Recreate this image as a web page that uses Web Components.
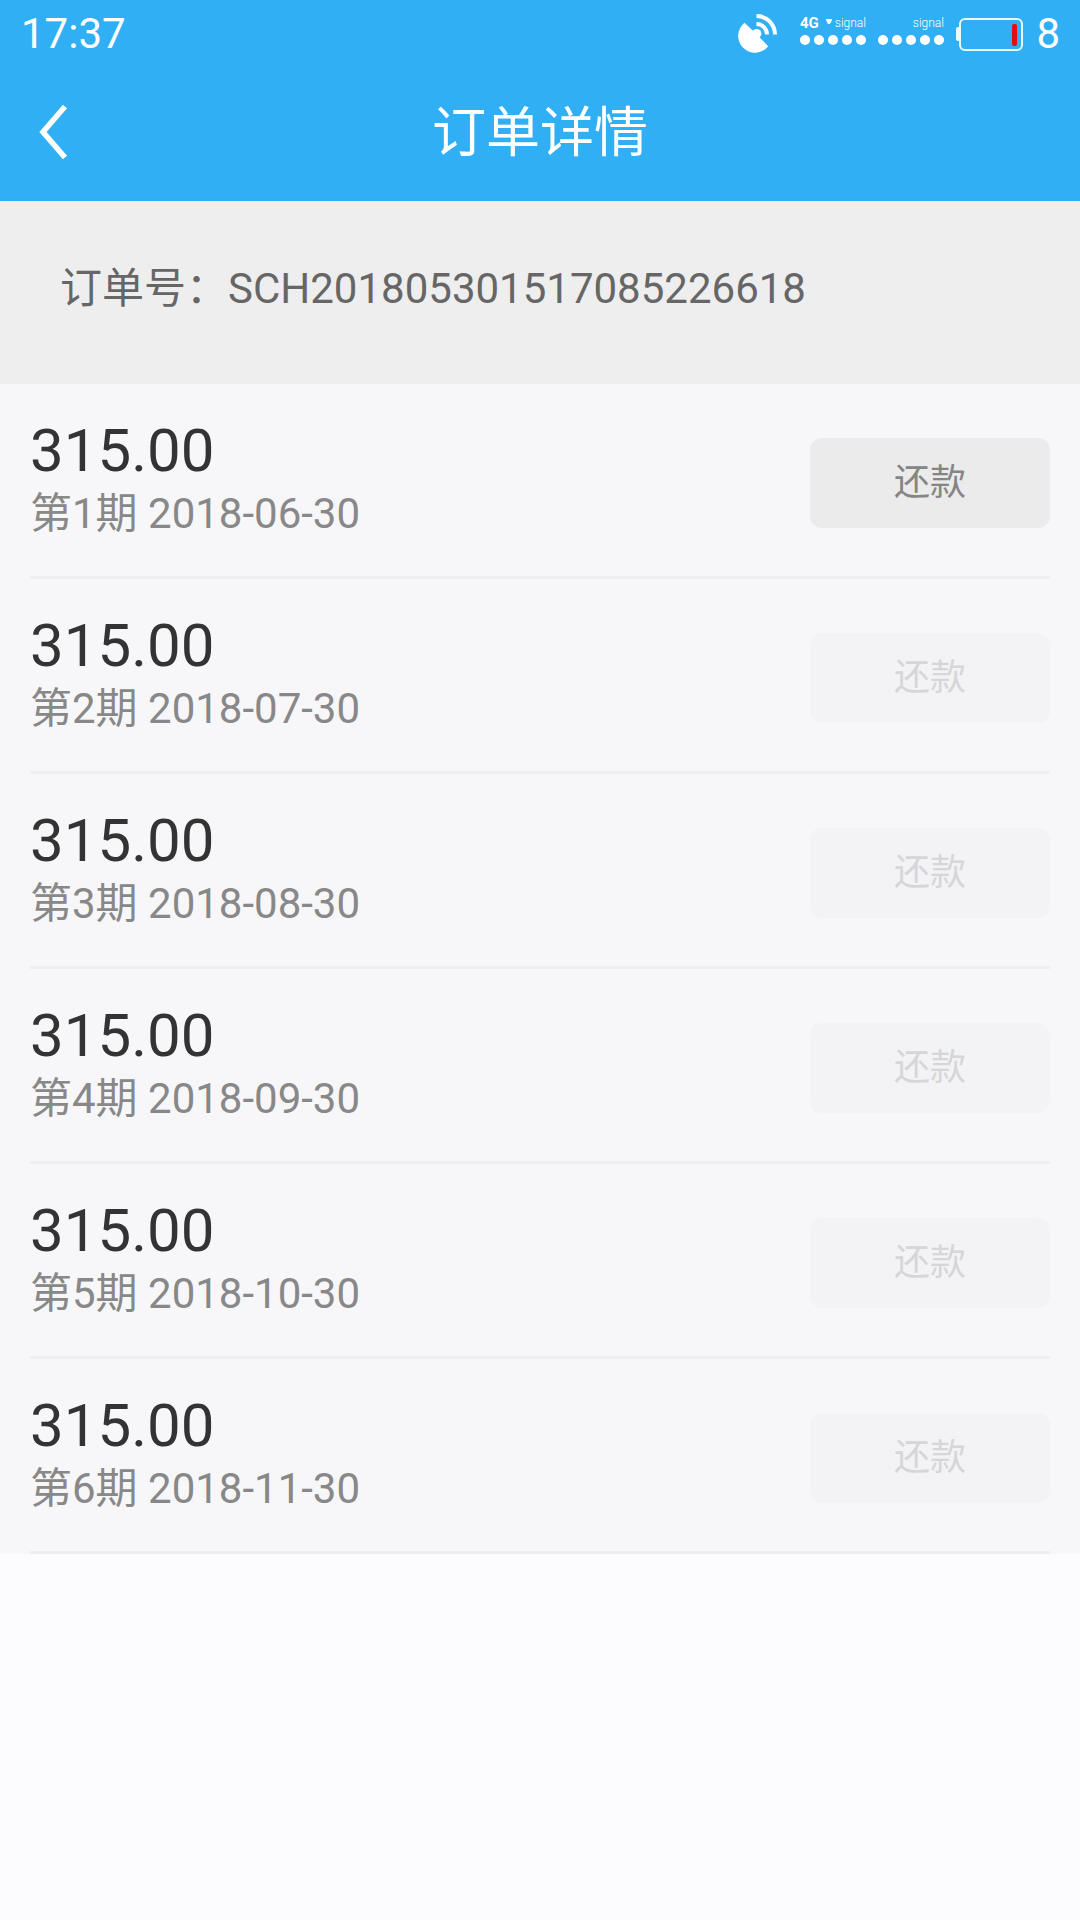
<!DOCTYPE html>
<html lang="zh-CN">
<head>
<meta charset="utf-8">
<meta name="viewport" content="width=device-width, initial-scale=1">
<title>订单详情</title>
<style>
  html { background: #fcfcfe; }
  body { margin: 0; font-family: Roboto, "Noto Sans CJK SC", sans-serif; font-size: 42px; }
</style>
</head>
<body>
<order-page>
  <status-bar slot="top" time="17:37" battery="8"></status-bar>
  <nav-bar slot="top">订单详情</nav-bar>
  <order-number slot="top" value="SCH201805301517085226618">订单号：</order-number>
  <bill-row amount="315.00" due="2018-06-30">第1期</bill-row>
  <bill-row amount="315.00" due="2018-07-30" locked>第2期</bill-row>
  <bill-row amount="315.00" due="2018-08-30" locked>第3期</bill-row>
  <bill-row amount="315.00" due="2018-09-30" locked>第4期</bill-row>
  <bill-row amount="315.00" due="2018-10-30" locked>第5期</bill-row>
  <bill-row amount="315.00" due="2018-11-30" locked>第6期</bill-row>
</order-page>
<script>
  class Base extends HTMLElement {
    connectedCallback() {
      if (!this.shadowRoot) this.attachShadow({ mode: 'open' }).innerHTML = this.render();
    }
  }

  customElements.define('order-page', class extends Base {
    render() {
      return `<style>
        :host { display: flex; flex-direction: column; }
        main { display: flex; flex-direction: column; background: #f7f7f9; }
      </style>
      <slot name="top"></slot>
      <main><slot></slot></main>`;
    }
  });

  customElements.define('signal-meter', class extends Base {
    render() {
      const net = this.getAttribute('network');
      return `<style>
        :host { display: flex; flex-direction: column; gap: 4px; padding-bottom: 6px; width: 66px; }
        .label { display: flex; justify-content: flex-end; align-items: center; height: 16px; font-size: 12px; line-height: 16px; font-weight: 300; }
        b { font-size: 15px; font-weight: 700; margin-right: auto; }
        .arrow { margin: 0 3px 4px 0; }
        .dots { display: flex; justify-content: space-between; }
        i { width: 10px; height: 10px; border-radius: 50%; background: #fff; }
      </style>
      <div class="label">${net ? `<b>${net}</b><svg class="arrow" width="6" height="5" viewBox="0 0 6 5"><path d="M0 0h6v1L4 5H2L0 1z" fill="#fff"/></svg>` : ''}<span>signal</span></div>
      <div class="dots"><i></i><i></i><i></i><i></i><i></i></div>`;
    }
  });

  customElements.define('status-bar', class extends Base {
    render() {
      return `<style>
        :host { display: flex; align-items: center; justify-content: space-between; height: 66px; padding: 0 20px 0 21px; background: #30aff5; color: #fff; line-height: 66px; }
        .right, .meters { display: flex; align-items: center; }
        .right { gap: 12px; }
        .meters { gap: 12px; margin-left: 10px; }
        .digits { padding-top: 2px; }
        .level { min-width: 24px; text-align: right; }
        svg { display: block; }
      </style>
      <span class="digits">${this.getAttribute('time')}</span>
      <div class="right">
        <svg width="40" height="40" viewBox="0 0 40 40" fill="none" aria-hidden="true">
          <path d="M6.500 9.800 L15.200 18 L21.500 24.200 L30.200 33.300 A16.800 16.800 0 1 1 6.500 9.800Z" fill="#fff"/>
          <circle cx="18.700" cy="20.600" r="4.700" fill="#fff"/>
          <path d="M18.500 11a10.500 10.500 0 0 1 10.500 10.500M18.500 3a18.500 18.500 0 0 1 18.500 18.500" stroke="#fff" stroke-width="4"/>
        </svg>
        <div class="meters">
          <signal-meter network="4G"></signal-meter>
          <signal-meter></signal-meter>
        </div>
        <svg width="68" height="36" viewBox="0 0 68 36" fill="none" aria-hidden="true">
          <rect x="4" y="4" width="62" height="31" rx="5" stroke="#e8fcff" stroke-width="2"/>
          <path d="M3 12H2a2 2 0 0 0-2 2v10a2 2 0 0 0 2 2h1z" fill="#e8fcff"/>
          <rect x="56" y="9" width="5" height="22" rx="2" fill="#e60c14"/>
        </svg>
        <span class="digits level">${this.getAttribute('battery')}</span>
      </div>`;
    }
  });

  customElements.define('nav-bar', class extends Base {
    render() {
      return `<style>
        :host { display: grid; grid-template-columns: 1fr auto 1fr; align-items: center; height: 135px; background: #30aff5; color: #fff; }
        button { justify-self: start; border: 0; background: none; padding: 30px 39px 34px; display: flex; cursor: pointer; }
        h1 { margin: 0; font-size: 54px; font-weight: 400; line-height: 61px; }
      </style>
      <button type="button" aria-label="返回"><svg width="29" height="56" viewBox="0 0 29 56" fill="none" aria-hidden="true"><path d="M26 2.500L4 28l22 25.500" stroke="#fff" stroke-width="5.500"/></svg></button>
      <h1><slot></slot></h1>`;
    }
  });

  customElements.define('order-number', class extends Base {
    render() {
      return `<style>
        :host { display: block; background: #eee; color: #666; padding: 58px 60px 65px; line-height: 60px; }
      </style><slot></slot>${this.getAttribute('value')}`;
    }
  });

  customElements.define('bill-row', class extends Base {
    render() {
      return `<style>
        :host { display: flex; align-items: center; justify-content: space-between; margin: 0 30px; padding: 35px 0 29px; border-bottom: 3px solid #eeeef0; }
        .text { line-height: 63px; color: #888; padding-bottom: 2px; }
        .amount { font-size: 60px; color: #333; }
        button { width: 240px; height: 90px; border: 0; border-radius: 12px; padding: 0; background: #ebebec; color: #858585; font: inherit; font-size: 36px; line-height: 90px; }
        button:disabled { background: #f3f3f5; color: #d6d6d8; }
      </style>
      <div class="text">
        <div class="amount">${this.getAttribute('amount')}</div>
        <div><slot></slot> <time>${this.getAttribute('due')}</time></div>
      </div>
      <button type="button" ${this.hasAttribute('locked') ? 'disabled' : ''}>还款</button>`;
    }
  });
</script>
</body>
</html>
